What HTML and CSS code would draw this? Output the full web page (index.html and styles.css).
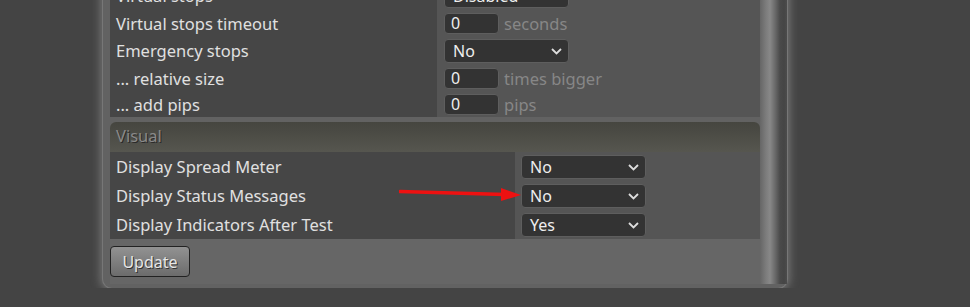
FILE: index.html
```html
<!DOCTYPE html>
<html lang="en">
<head>
<meta charset="UTF-8">
<title>Settings</title>
<link rel="stylesheet" href="styles.css">
</head>
<body>
<div class="panel">
    <div class="main">
        <table class="grid basic">
            <tr class="pick">
                <td class="label">Virtual stops</td>
                <td class="value"><div class="select"><span>Disabled</span><svg class="chev" width="11" height="7" viewBox="0 0 11 7"><path d="M1 1l4.5 4.5L10 1" fill="none" stroke="#ddd" stroke-width="1.8"/></svg></div></td>
            </tr>
            <tr class="num">
                <td class="label">Virtual stops timeout</td>
                <td class="value"><div class="ctl"><span class="field">0</span><span class="unit">seconds</span></div></td>
            </tr>
            <tr class="pick">
                <td class="label">Emergency stops</td>
                <td class="value"><div class="select"><span>No</span><svg class="chev" width="11" height="7" viewBox="0 0 11 7"><path d="M1 1l4.5 4.5L10 1" fill="none" stroke="#ddd" stroke-width="1.8"/></svg></div></td>
            </tr>
            <tr class="num">
                <td class="label">... relative size</td>
                <td class="value"><div class="ctl"><span class="field">0</span><span class="unit">times bigger</span></div></td>
            </tr>
            <tr class="num">
                <td class="label">... add pips</td>
                <td class="value"><div class="ctl"><span class="field">0</span><span class="unit">pips</span></div></td>
            </tr>
        </table>

        <div class="section">Visual</div>

        <table class="grid visual">
            <tr class="pick">
                <td class="label">Display Spread Meter</td>
                <td class="value"><div class="select"><span>No</span><svg class="chev" width="11" height="7" viewBox="0 0 11 7"><path d="M1 1l4.5 4.5L10 1" fill="none" stroke="#ddd" stroke-width="1.8"/></svg></div></td>
            </tr>
            <tr class="pick">
                <td class="label">Display Status Messages</td>
                <td class="value"><div class="select"><span>No</span><svg class="chev" width="11" height="7" viewBox="0 0 11 7"><path d="M1 1l4.5 4.5L10 1" fill="none" stroke="#ddd" stroke-width="1.8"/></svg></div></td>
            </tr>
            <tr class="pick">
                <td class="label">Display Indicators After Test</td>
                <td class="value"><div class="select"><span>Yes</span><svg class="chev" width="11" height="7" viewBox="0 0 11 7"><path d="M1 1l4.5 4.5L10 1" fill="none" stroke="#ddd" stroke-width="1.8"/></svg></div></td>
            </tr>
        </table>

        <div class="footer">
            <button class="btn">Update</button>
        </div>
    </div>
    <div class="scroll"></div>
</div>

<!-- annotation arrow -->
<svg class="arrow" width="130" height="20" viewBox="0 0 130 20">
    <path d="M1 5.5L106 8.5" stroke="#ee1111" stroke-width="3.5" stroke-linecap="round"/>
    <path d="M102 2L122 9L102 15z" fill="#ee1111"/>
</svg>
</body>
</html>
```

FILE: styles.css
```css
body{
    margin: 0;
    background: #444;
    font: 16.5px "Noto Sans", "Open Sans", sans-serif;
    color: #ddd;
    overflow: hidden;
}
.panel{
    display: flex;
    width: 684px;
    margin: -19px 0 0 103px;
    padding-bottom: 4px;
    background: #626262;
    border-radius: 0 0 9px 9px;
    box-shadow: 0 0 0 1px #777, 0 0 9px 3px #727272;
}
.main{
    flex: 1;
    padding-left: 7px;
}
.scroll{
    width: 27px;
    background: linear-gradient(to right, #666 0, #7c7c7c 6px, #888 10px, #6a6a6a 15px, #4a4a4a 20px, #454545 24px, #4c4c4c 27px);
}
.grid{
    width: 650px;
    border-collapse: collapse;
    border-spacing: 0;
}
.grid td{
    padding: 3px 0 2px;
    line-height: 20px;
    vertical-align: middle;
}
.pick td{
    height: 24px;
}
.num td{
    height: 21px;
}
.label{
    background: #464646;
    padding-left: 6px !important;
    color: #e0e0e0;
    white-space: nowrap;
}
.value{
    background: #555;
}
.basic .label{
    width: 321px;
}
.basic .value{
    padding-left: 7px !important;
}
.visual .label{
    width: 399px;
}
.visual .value{
    padding-left: 6px !important;
}
.select{
    display: flex;
    align-items: center;
    justify-content: space-between;
    box-sizing: border-box;
    width: 125px;
    height: 24px;
    padding: 0 6px 0 8px;
    background: #333;
    border: 1px solid #5e5e5e;
    border-radius: 4px;
    color: #eee;
    font-size: 16px;
}
.ctl{
    display: flex;
    align-items: center;
    height: 21px;
}
.field{
    box-sizing: border-box;
    width: 55px;
    height: 21px;
    padding-left: 6px;
    line-height: 19px;
    background: #333;
    border: 1px solid #5e5e5e;
    border-radius: 4px;
    color: #eee;
    font-size: 16px;
}
.unit{
    margin-left: 5px;
    color: #878787;
}
.section{
    margin-top: 5px;
    height: 30px;
    line-height: 28px;
    width: 644px;
    padding-left: 6px;
    background: linear-gradient(#45453f, #56564f);
    border-radius: 6px 6px 0 0;
    color: #898989;
    text-shadow: 1px 1px 0 #2a2a2a;
}
.footer{
    background: #666;
    padding: 7px 0 7px;
}
.btn{
    display: block;
    width: 80px;
    height: 31px;
    padding: 0;
    background: linear-gradient(#929292, #6c6c6c);
    border: 1px solid #222;
    border-radius: 4px;
    color: #e6e6e6;
    font: 16px "Noto Sans", sans-serif;
    text-shadow: 1px 1px 0 #333;
}
.arrow{
    position: absolute;
    left: 399px;
    top: 186px;
}
```
